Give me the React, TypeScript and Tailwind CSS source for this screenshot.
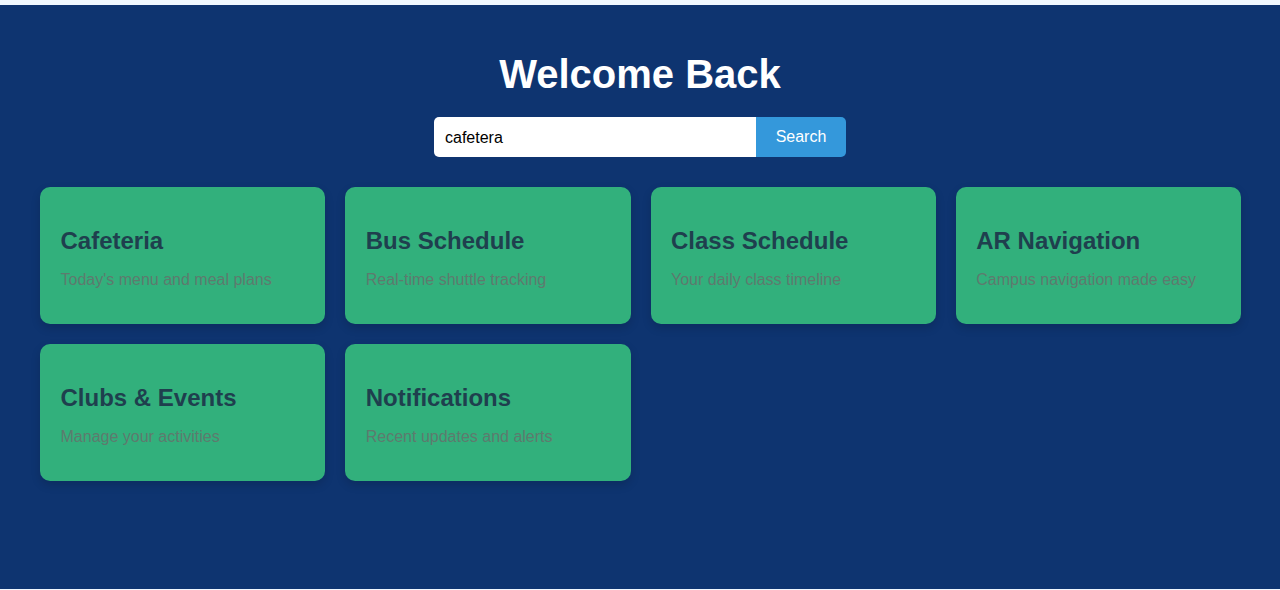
import React from "react";

const cards = [
  { title: "Cafeteria", desc: "Today's menu and meal plans" },
  { title: "Bus Schedule", desc: "Real-time shuttle tracking" },
  { title: "Class Schedule", desc: "Your daily class timeline" },
  { title: "AR Navigation", desc: "Campus navigation made easy" },
  { title: "Clubs & Events", desc: "Manage your activities" },
  { title: "Notifications", desc: "Recent updates and alerts" },
];

export default function App() {
  return (
    <div className="bg-[#f0f8ff] pt-[5px] pb-[1px] font-['Liberation_Sans',Arial,sans-serif]">
      <div className="bg-[#0e3470] h-[584px] pt-[46px] px-10">
        <h1 className="text-center text-white text-[40px] font-bold leading-[46px]">Welcome Back</h1>
        <div className="flex justify-center mt-5">
          <div className="flex h-[40px] w-[412px]">
            <input
              className="w-[322px] bg-white rounded-l-[5px] pl-[11px] pr-[10px] pt-[1px] text-[16px] text-black outline-none"
              defaultValue="cafetera"
            />
            <button className="w-[90px] bg-[#3498db] text-white text-[16px] rounded-r-[5px]">Search</button>
          </div>
        </div>
        <div className="grid grid-cols-4 gap-x-5 gap-y-[20.5px] mt-[30px] mr-[-1px]">
          {cards.map((c) => (
            <div
              key={c.title}
              className="bg-[#32b07c] rounded-[10px] h-[136.5px] pl-[20.5px] pr-5 pt-[40px] shadow-[0_4px_10px_rgba(0,0,0,0.15)]"
            >
              <h3 className="text-[24px] font-bold leading-[28px] text-[#1f3f4e]">{c.title}</h3>
              <p className="mt-4 text-[16px] leading-[18px] text-[#5e7a6e]">{c.desc}</p>
            </div>
          ))}
        </div>
      </div>
    </div>
  );
}
